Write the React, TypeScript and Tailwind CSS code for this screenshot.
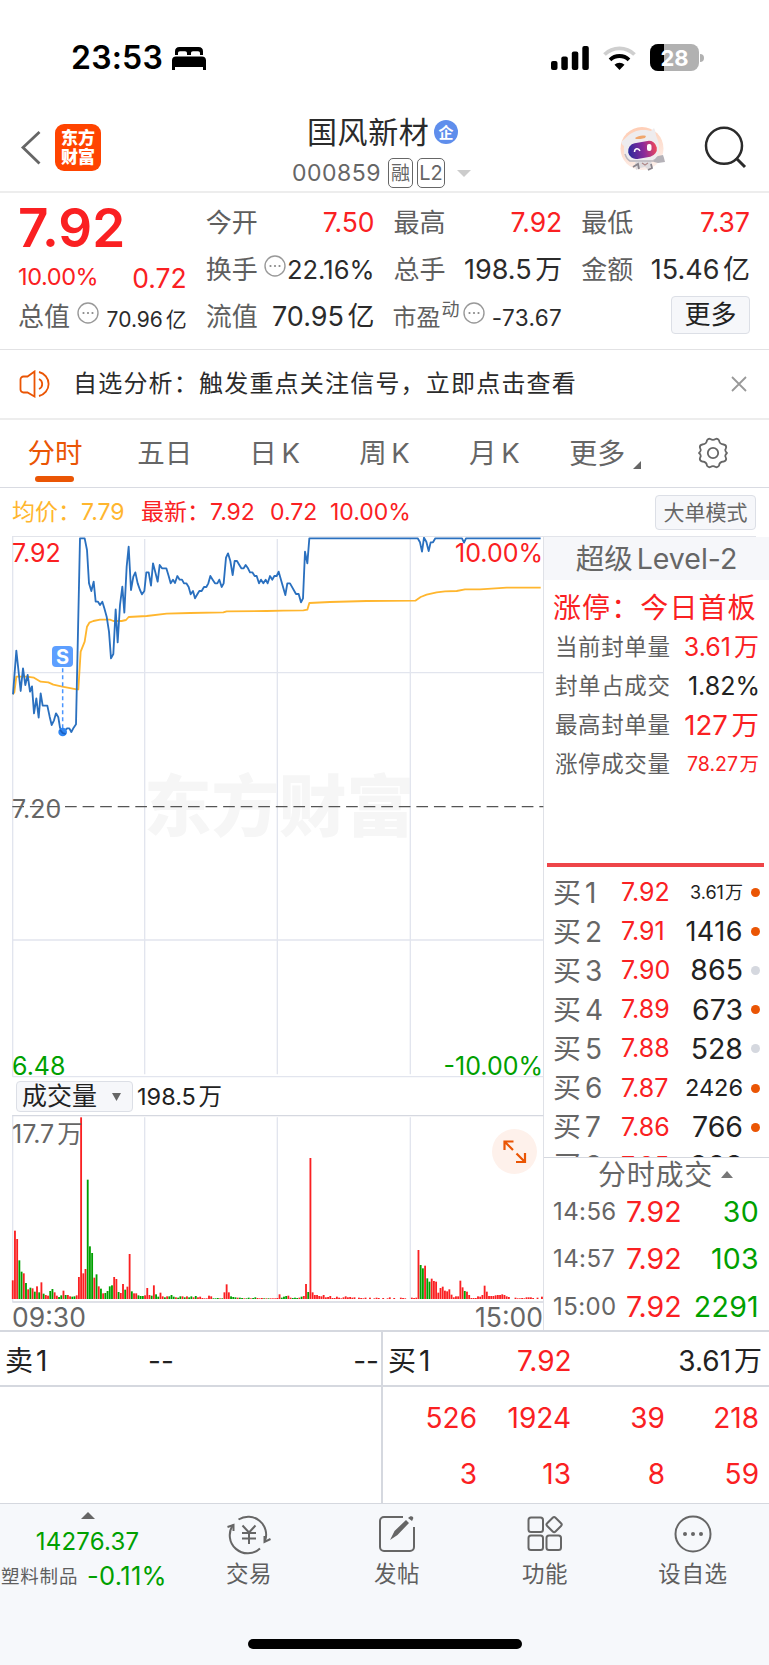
import type { ReactNode } from "react";

type Quote = { label: string; value: string; className?: string; hint?: boolean };

const RED = "#fa2022";
const GREEN = "#00a000";

// Minute prices, in the coordinate space of the chart's viewBox
const PRICE_LINE =
  "39,628 49,497 62,618 69,550 76,600 83,570 90,620 96,604 102,685 109,640 116,698 122,625 128,662 142,662 149,695 155,720 162,706 168,685 175,697 180,728 188,741 202,730 208,730 214,741 221,728 228,718 240,160 254,160 261,195 267,295 274,318 281,290 287,350 294,350 300,360 307,350 313,370 320,395 327,440 333,520 340,507 347,373 353,472 360,360 367,305 373,383 380,245 386,185 393,315 400,275 406,262 413,295 420,315 426,328 433,318 439,262 446,262 453,302 459,235 466,262 473,290 479,240 486,250 499,250 506,273 512,295 519,284 525,294 532,273 539,284 546,284 552,295 559,295 566,306 572,328 579,318 585,340 592,328 598,318 605,318 612,306 619,306 625,295 631,273 638,284 645,295 652,295 658,284 665,306 671,295 678,218 684,205 691,228 698,270 704,228 711,228 718,240 724,250 731,250 737,240 744,250 750,262 757,262 764,273 770,273 777,295 783,284 790,295 797,284 803,295 810,273 817,284 823,273 830,273 836,260 856,330 862,295 870,295 888,327 896,327 903,352 909,340 915,200 922,235 928,160 1253,160 1260,172 1266,200 1272,158 1279,170 1286,198 1292,172 1299,172 1306,160 1386,160 1392,173 1398,160 1622,160";

const AVERAGE_LINE =
  "39,628 43,622 49,575 80,575 102,578 122,590 145,592 160,599 187,605 230,613 235,613 242,500 254,470 261,425 268,413 280,408 300,404 330,404 340,408 365,408 378,405 386,396 440,393 500,386 570,384 670,382 680,379 800,378 850,377 910,376 922,374 928,354 990,351 1100,348 1246,347 1262,336 1280,329 1310,322 1335,319 1370,318 1395,313 1440,313 1520,308 1622,308";

// One entry per minute: r = up, g = down, then the bar height
const VOLUME = [
  "r56 r205 r180 g116 g82 r77 g48 r29 g34 r32 g22 r38 g20 r50 g16 r12 r10 g24 g30 r20 r10 g6 g11 r25 g12 r12 r8 g7 g8 r11",
  "r66 r545 r77 r90 g358 g158 g138 r64 g74 r38 g31 r17 g18 g24 g38 g41 r66 r60 g21 r18 r45 g28 r37 r135 g23 r17 r17 g11 g9 g9",
  "r11 r33 r12 g10 r41 g14 g7 r19 r8 g5 r8 g8 g12 g7 r5 g4 g8 r8 g5 r8 g5 g8 r5 g9 r5 r7 r3 r2 r2 r10",
  "r8 g2 g2 g3 r2 g2 r20 r44 r20 g8 g6 g5 r4 g4 g3 r2 g2 g4 r2 g3 g5 r3 r2 r3 g2 r2 g2 r2 r2 r2",
  "r3 r14 g4 g7 g9 r10 r4 g3 g4 g3 r4 g7 r9 r45 g21 r423 r20 r12 r12 r9 r8 r12 r5 r6 r9 r3 r3 r7 r4 r2",
  "r5 r8 r5 r6 r4 r5 r0 r4 r3 r2 r4 r0 r4 r0 r2 r4 r3 r0 r3 r0 r2 r5 r0 r3 r0 r0 r4 r3 r2 r0",
  "r0 r4 r3 r4 r147 g102 g92 r100 g62 g52 r61 r54 r52 r19 r33 r37 r25 r23 r29 r13 r5 r8 r8 r55 r35 g24 r22 r12 r3 r3",
  "r3 r8 r7 r12 r40 r22 r9 r9 r9 r11 r12 r12 r14 r12 r8 r6 r0 r0 r4 r2 r2 r3 r2 r5 r5 r5 r3 r0 r4 r0 r7",
]
  .join(" ")
  .split(" ");

const TABS = ["分时", "五日", "日 K", "周 K", "月 K"];

const QUOTE_COLUMNS: Quote[][] = [
  [
    { label: "今开", value: "7.50", className: "text-[26.5px] text-[#fa2022]" },
    { label: "换手", value: "22.16%", className: "text-[25.5px]", hint: true },
    { label: "流值", value: "70.95 亿", className: "text-[27px]" },
  ],
  [
    { label: "最高", value: "7.92", className: "text-[26.5px] text-[#fa2022]" },
    { label: "总手", value: "198.5 万", className: "text-[27px]" },
  ],
  [
    { label: "最低", value: "7.37", className: "text-[26.5px] text-[#fa2022]" },
    { label: "金额", value: "15.46 亿", className: "text-[27px]" },
  ],
];

const LIMIT_ROWS = [
  { label: "当前封单量", value: "3.61 万", className: "text-[25px] text-[#fa2022]" },
  { label: "封单占成交", value: "1.82%", className: "-mr-px text-[25px] text-[#222]" },
  { label: "最高封单量", value: "127 万", className: "text-[27.5px] text-[#fa2022]" },
  { label: "涨停成交量", value: "78.27 万", className: "text-[19.5px] text-[#fa2022]" },
];

const BIDS = [
  { level: 1, price: "7.92", volume: "3.61 万", size: "text-[18px]", hot: true },
  { level: 2, price: "7.91", volume: "1416", size: "text-[27px] tracking-[0.5px]", hot: true },
  { level: 3, price: "7.90", volume: "865", size: "text-[28.5px]", hot: false },
  { level: 4, price: "7.89", volume: "673", size: "text-[28.5px]", hot: true },
  { level: 5, price: "7.88", volume: "528", size: "text-[28.5px]", hot: false },
  { level: 6, price: "7.87", volume: "2426", size: "text-[23.5px]", hot: true },
  { level: 7, price: "7.86", volume: "766", size: "text-[28.5px]", hot: true },
  { level: 8, price: "7.85", volume: "808", size: "text-[28.5px]", hot: true },
];

const TRADES = [
  { time: "14:56", price: "7.92", volume: "30" },
  { time: "14:57", price: "7.92", volume: "103" },
  { time: "15:00", price: "7.92", volume: "2291" },
];

const QUEUE = ["526", "1924", "39", "218", "3", "13", "8", "59"];

function MoreDots({ className = "" }: { className?: string }) {
  return (
    <svg className={`h-[22px] w-[22px] shrink-0 ${className}`} viewBox="0 0 22 22">
      <circle cx="11" cy="11" r="10" fill="none" stroke="#999" strokeWidth="1.4" />
      <circle cx="6.5" cy="11" r="1.1" fill="#888" />
      <circle cx="11" cy="11" r="1.1" fill="#888" />
      <circle cx="15.5" cy="11" r="1.1" fill="#888" />
    </svg>
  );
}

function StatusBar() {
  return (
    <div className="flex h-[115px] items-center pl-[71px] pr-[65px] text-black">
      <span className="w-[101px] text-[32px] font-semibold tracking-[0.2px]">23:53</span>
      <svg className="h-6 w-[34px]" viewBox="0 0 34 24">
        <path d="M3 9V5.500C3 2.500 4.500 1 7.500 1h19c3 0 4.500 1.500 4.500 4.500V9h-3V7.500C28 6 27.300 5.300 26 5.300h-5c-1.300 0-2 .7-2 2.200V9h-4V7.500c0-1.500-.7-2.200-2-2.200H8c-1.300 0-2 .7-2 2.200V9z" />
        <path d="M0 24V14.500C0 12 1.500 10.500 4 10.500h26c2.500 0 4 1.500 4 4V24h-3v-3H3v3z" />
        <path d="M15.500 3h3v5h-3z" />
      </svg>
      <div className="ml-auto flex items-center">
        <svg className="h-6 w-[38px]" viewBox="0 0 38 24">
          <rect x="0" y="15" width="6.500" height="9" rx="2" />
          <rect x="10.300" y="10.500" width="6.500" height="13.500" rx="2" />
          <rect x="20.800" y="5.500" width="6.500" height="18.500" rx="2" />
          <rect x="31.300" y="0" width="6.500" height="24" rx="2" />
        </svg>
        <svg className="ml-[14px] h-6 w-[33px]" viewBox="0 0 33 24" fill="none">
          <path d="M1.500 8.500a21.500 21.500 0 0 1 30 0" stroke="#cfcfcf" strokeWidth="3.800" />
          <path d="M7 13.800a13.800 13.800 0 0 1 19 0" stroke="#000" strokeWidth="3.800" />
          <path d="M16.500 24l-5-5.200a7.200 7.200 0 0 1 10 0z" fill="#000" />
        </svg>
        <div className="relative ml-[14px] flex h-[27px] w-[49px] items-center justify-center overflow-hidden rounded-[8px] bg-[#b1b1b1]">
          <div className="absolute inset-y-0 left-0 w-[14px] bg-black" />
          <span className="relative text-[22px] font-bold text-white">28</span>
        </div>
        <div className="ml-px h-[8px] w-[4px] rounded-r-full bg-[#b1b1b1]" />
      </div>
    </div>
  );
}

function Robot() {
  return (
    <svg className="h-[46px] w-[46px]" viewBox="0 0 46 46">
      <defs>
        <linearGradient id="visor" x1="0" x2="1">
          <stop offset="0" stopColor="#2b2a9c" />
          <stop offset="0.550" stopColor="#8c2a9a" />
          <stop offset="1" stopColor="#f0485a" />
        </linearGradient>
        <linearGradient id="halo" x1="0" x2="0.300" y2="1">
          <stop offset="0" stopColor="#ffc9ae" />
          <stop offset="1" stopColor="#fdeee8" />
        </linearGradient>
      </defs>
      <circle cx="22" cy="22.500" r="21.500" fill="url(#halo)" />
      <path d="M17 33h13l2 5-3 6-4-3-5 1-4 2-1-6z" fill="#dedbde" />
      <path d="M13 41l5-3 1 5M31 38l1 4-4 2" stroke="#8b858c" strokeWidth="1.800" fill="none" />
      <path d="M22 37l3 2 3-2" stroke="#b08a8a" strokeWidth="1.200" fill="none" />
      <path d="M33 33l5-3 5-1 1 3 1 4-7 1-4-1z" fill="#b5b2b8" />
      <path d="M2 15c4-2 6-7 12-9 6-3 13-2 17-1l3-3c2 3 1 6 3 10 3 6 3 16-2 21-6 3-19 4-26 2-6-4-5-11-5-15-2-1-3-3-2-5z" fill="#eeecee" />
      <path d="M5 28c1 3 3 6 5 7h24" stroke="#bbb7bd" strokeWidth="1.500" fill="none" />
      <path d="M15 12c3-2 7-3 11-2l-1 2c-3 1-6 1-9 1z" fill="#f0a66c" />
      <rect x="8" y="16" width="29" height="16" rx="8" transform="rotate(-10 22 24)" fill="url(#visor)" />
      <path d="M14.500 26c0-4 4-4.500 5.500-1" stroke="#fff" strokeWidth="1.500" fill="none" />
      <rect x="27" y="18" width="4.500" height="7" rx="2" fill="#fff" />
    </svg>
  );
}

function Header() {
  return (
    <div className="flex h-[78px] items-start border-b-2 border-[#ededed] pl-5">
      <svg className="mt-[15px] h-[36px] w-[22px]" viewBox="0 0 22 36" fill="none">
        <path d="M19.500 2L3 17.500 19.500 33.500" stroke="#666" strokeWidth="2.800" />
      </svg>
      <div className="ml-[13px] mt-[9px] flex h-[47px] w-[46px] flex-col items-center justify-center rounded-[9px] bg-[#ff4400] text-[17px] font-black leading-[19px] text-white">
        <span>东方</span>
        <span>财富</span>
      </div>
      <div className="ml-[178px] w-[206px]">
        <div className="-mt-px flex h-[36px] items-center pl-[28px]">
          <span className="w-[127px] whitespace-nowrap text-[30px] tracking-[0.6px] text-[#2b2b2b]">
            国风新材
          </span>
          <span className="flex h-6 w-6 items-center justify-center rounded-full bg-[#5f8eec] text-[15px] font-bold text-white">
            企
          </span>
        </div>
        <div className="mt-[7px] flex h-[32px] items-center pl-[13px] text-[#666]">
          <span className="w-[96px] text-[23px] tracking-[0.5px]">000859</span>
          <span className="flex h-[30px] w-[25px] items-center justify-center rounded-[5px] border border-[#666] text-[19px]">
            融
          </span>
          <span className="ml-1 flex h-[30px] w-[28px] items-center justify-center rounded-[5px] border border-[#666] text-[20px]">
            L2
          </span>
          <svg className="ml-3 h-[7px] w-[14px]" viewBox="0 0 14 7">
            <path d="M0 0h14L7 7z" fill="#ccc" />
          </svg>
        </div>
      </div>
      <div className="ml-[135px] mt-[11px]">
        <Robot />
      </div>
      <svg className="ml-[38px] mt-[11px] h-[44px] w-[44px]" viewBox="0 0 44 44" fill="none">
        <circle cx="20" cy="19.800" r="18" stroke="#2b2b2b" strokeWidth="2.500" />
        <path d="M32 32l9 9" stroke="#2b2b2b" strokeWidth="3" />
      </svg>
    </div>
  );
}

function QuoteRow({ label, value, className = "", hint }: Quote) {
  return (
    <div className="-ml-px flex h-[47px] items-center whitespace-nowrap">
      <span className="text-[26px] text-[#5f5f5f]">{label}</span>
      {hint && <MoreDots className="-mt-2 ml-[6px]" />}
      <span className={`ml-auto [word-spacing:-4px] ${className}`}>{value}</span>
    </div>
  );
}

function QuotePanel() {
  return (
    <div className="flex h-[157px] gap-5 border-b border-[#e2e2e4] px-[19px] pt-[6px] text-[#2b2b2b]">
      <div className="-ml-px w-[169px]">
        <div className="flex h-[58px] items-center text-[53px] font-semibold text-[#fa2022]">7.92</div>
        <div className="flex h-9 items-center justify-between text-[#fa2022]">
          <span className="pt-1 text-[23.5px] tracking-[-0.4px]">10.00%</span>
          <span className="pt-[7px] text-[26.500px]">0.72</span>
        </div>
        <div className="flex h-[47px] items-center whitespace-nowrap">
          <span className="text-[26px] text-[#5f5f5f]">总值</span>
          <MoreDots className="-mt-2 ml-[7px]" />
          <span className="ml-auto pt-[6px] text-[21px] [word-spacing:-3px]">70.96 亿</span>
        </div>
      </div>
      {QUOTE_COLUMNS.map((rows, i) => (
        <div key={i} className="w-[168px]">
          {rows.map((row) => (
            <QuoteRow key={row.label} {...row} />
          ))}
          {i === 1 && (
            <div className="-ml-[2px] flex h-[47px] items-center whitespace-nowrap">
              <span className="pt-[3px] text-[24px] text-[#5f5f5f]">市盈</span>
              <span className="-mt-[13px] ml-px text-[18px] text-[#5f5f5f]">动</span>
              <MoreDots className="-mt-2 ml-[3px]" />
              <span className="ml-auto pt-[4px] text-[22.5px] tracking-[0.4px]">-73.67</span>
            </div>
          )}
          {i === 2 && (
            <div className="ml-auto mt-[3px] flex h-[38px] w-[79px] items-center justify-center rounded-[4px] border border-[#dcdfe6] bg-[#f6f7fa] text-[26px] text-[#222]">
              更多
            </div>
          )}
        </div>
      ))}
    </div>
  );
}

function Notice() {
  return (
    <div className="flex h-[70px] items-center border-b-2 border-[#ededed] pl-[19px] pr-[22px]">
      <svg className="h-[28px] w-[34px]" viewBox="0 0 34 28" fill="none" stroke="#ea5504" strokeWidth="1.800">
        <path d="M15.500 1.500v25L8.500 22.500H4.500a3 3 0 0 1-3-3v-10a3 3 0 0 1 3-3h4z" />
        <path d="M20 9a5.500 5.500 0 0 1 0 10" />
        <path d="M20 2a12.300 12.300 0 0 1 0 24" />
      </svg>
      <span className="ml-[20px] whitespace-nowrap text-[24px] tracking-[1.2px] text-[#2b2b2b]">
        自选分析：触发重点关注信号，立即点击查看
      </span>
      <svg className="ml-auto h-[16px] w-[16px]" viewBox="0 0 16 16">
        <path d="M1 1l14 14M15 1L1 15" stroke="#999" strokeWidth="1.800" />
      </svg>
    </div>
  );
}

function Tabs() {
  return (
    <div className="grid h-[68px] grid-cols-7 border-b border-[#d9dbe2] text-[27.500px] text-[#666] [word-spacing:-3px]">
      {TABS.map((tab, i) => (
        <div key={tab} className="relative flex items-center justify-center">
          {i === 0 ? <span className="text-[#ea5504]">{tab}</span> : tab}
          {i === 0 && <div className="absolute bottom-[5px] h-[6px] w-[39px] rounded-full bg-[#ea5504]" />}
        </div>
      ))}
      <div className="flex items-center justify-center pl-[2px] text-[28px]">
        更多
        <svg className="ml-[8px] mt-[22px] h-2 w-2" viewBox="0 0 8 8">
          <path d="M8 0v8H0z" fill="#666" />
        </svg>
      </div>
      <div className="flex items-center justify-center pr-[2px]">
        <svg className="-mt-px h-[32px] w-[32px]" viewBox="0 0 32 32" fill="none" stroke="#666" strokeWidth="1.800">
          <path
            d="M10 3.200q1.600-2 3.400-1.200q2.600 1.600 5.200 0q1.800-.8 3.400 1.200q.3 3.800 4.600 4.300q2.400.4 2.600 2.600q-.4 1.800-1 2.900q.2 1.800 1.800 3q-1.600 1.500-1.800 3q.6 1.400 1 2.900q-.2 2.200-2.600 2.600q-4.300.5-4.600 4.300q-1.600 2-3.400 1.200q-2.600-1.600-5.200 0q-1.800.8-3.400-1.200q-.3-3.800-4.600-4.300q-2.400-.4-2.600-2.600q.4-1.800 1-2.900q-.2-1.800-1.800-3q1.600-1.500 1.800-3q-.6-1.400-1-2.900q.2-2.200 2.600-2.600q4.300-.5 4.600-4.300z"
            strokeLinejoin="round"
          />
          <circle cx="16" cy="16" r="5.200" />
        </svg>
      </div>
    </div>
  );
}

function AverageBar() {
  return (
    <div className="ml-3 mr-[13px] flex h-[49px] items-center whitespace-nowrap border-b border-[#e2e4ea] pt-px text-[23px] text-[#fa2022]">
      <span className="w-[129px] text-[#ffb62e]">均价：7.79</span>
      <span className="w-[129px]">最新：7.92</span>
      <span className="w-[60px]">0.72</span>
      <span>10.00%</span>
      <span className="ml-auto flex h-[35px] w-[101px] items-center justify-center rounded-[4px] border border-[#dcdfe6] bg-[#f6f7fa] text-[21px] text-[#666]">
        大单模式
      </span>
    </div>
  );
}

function PriceChart() {
  return (
    <div className="relative h-[541px] text-[25px] leading-[30px]">
      <div className="absolute left-[144px] top-[233px] whitespace-nowrap text-[67.5px] font-black leading-[74px] text-[#f6f6f6]">
        东方财富
      </div>
      <svg className="absolute inset-0 h-[541px] w-[544px]" viewBox="0 156 1632 1623" fill="none">
        <g stroke="#e2e5ee" strokeWidth="4">
          <path d="M434 162V1768M832 162V1768M1231 162V1768M38 563H1630M38 1365H1630" />
          <path d="M38 154V1775M38 1775H1630" />
        </g>
        <path d="M37 965H1630" stroke="#555" strokeWidth="3.500" strokeDasharray="35 17.700" />
        <polyline points={AVERAGE_LINE} stroke="#ffb62e" strokeWidth="5.500" strokeLinejoin="round" />
        <polyline points={PRICE_LINE} stroke="#2a70bf" strokeWidth="5.500" strokeLinejoin="round" />
        <path d="M188 550V730" stroke="#4a95ff" strokeWidth="4.500" strokeDasharray="12 9" />
        <circle cx="188" cy="741" r="13" fill="#2f86f2" />
        <path d="M180 734l8 10 9 3" stroke="#1b5fc0" strokeWidth="5" />
      </svg>
      <span className="absolute left-[52px] top-[109px] flex h-[21px] w-[21px] items-center justify-center rounded-[4px] bg-[#5d9fff] text-[20px] font-bold text-white">
        S
      </span>
      <span className="absolute left-3 top-px text-[#fa2022]">7.92</span>
      <span className="absolute right-0 top-px text-[#fa2022]">10.00%</span>
      <span className="absolute left-3 top-[257px] text-[#666]">7.20</span>
      <span className="absolute left-3 top-[514px] text-[#00a000]">6.48</span>
      <span className="absolute right-0 top-[514px] text-[#00a000]">-10.00%</span>
    </div>
  );
}

function VolumeChart() {
  return (
    <div className="relative h-[188px]">
      <svg className="absolute inset-0 h-[188px] w-[544px]" viewBox="0 194 1632 564">
        <path d="M434 201V746M832 201V746M1231 201V746" stroke="#e2e5ee" strokeWidth="4" />
        <path d="M38 192V754" stroke="#e2e5ee" strokeWidth="4" />
        <path d="M37 196H1630M37 755H1630" stroke="#d5d8e0" strokeWidth="4" />
        {VOLUME.map((bar, i) => {
          const height = Number(bar.slice(1));
          return (
            <rect
              key={i}
              x={35.5 + i * 6.615}
              y={746 - height}
              width="5.500"
              height={height}
              fill={bar[0] === "r" ? RED : GREEN}
            />
          );
        })}
      </svg>
      <span className="absolute left-3 top-1 text-[25px] leading-[30px] text-[#666] [word-spacing:-4px]">
        17.7 万
      </span>
      <div className="absolute right-[6px] top-[14px] h-[45px] w-[45px] rounded-full bg-[#fef1eb]">
        <svg className="h-[45px] w-[45px]" viewBox="0 0 45 45" fill="none" stroke="#ea5504" strokeWidth="2.200">
          <path d="M12.500 21V12.500H21.500M12.500 12.500L21 21" />
          <path d="M33 24V33H24M33 33L24.500 24.500" />
        </svg>
      </div>
    </div>
  );
}

function ChartColumn() {
  return (
    <div className="w-[544px] border-r border-[#dfe1e7]">
      <PriceChart />
      <div className="flex h-[37px] items-center pl-4 text-[#222]">
        <div className="flex h-[31px] w-[117px] items-center rounded-[4px] border border-[#dcdfe6] bg-[#f6f7fa] pl-[5px] text-[25px]">
          成交量
          <svg className="ml-[15px] h-2 w-[9px]" viewBox="0 0 9 8">
            <path d="M0 0h9L4.500 8z" fill="#666" />
          </svg>
        </div>
        <span className="ml-1 text-[23.5px] [word-spacing:-4px]">198.5 万</span>
      </div>
      <VolumeChart />
      <div className="flex h-[28px] items-center justify-between pl-[12px] text-[26.500px] text-[#666]">
        <span>09:30</span>
        <span>15:00</span>
      </div>
    </div>
  );
}

function SidePanel() {
  return (
    <div className="flex-1 [word-spacing:-4px]">
      <div className="flex h-[43px] items-center justify-center bg-[#f6f7fa] pt-px text-[28.500px] text-[#666]">
        超级 Level-2
      </div>
      <div className="h-[283px] pl-[9px] pr-[10px] pt-[9px]">
        <div className="h-[39px] whitespace-nowrap text-[28px] leading-[39px] tracking-[1.1px] text-[#fa2022]">
          涨停：今日首板
        </div>
        {LIMIT_ROWS.map((row) => (
          <div key={row.label} className="flex h-[39px] items-center justify-between whitespace-nowrap pl-[2px]">
            <span className="text-[22.5px] tracking-[0.6px] text-[#5f5f5f]">{row.label}</span>
            <span className={row.className}>{row.value}</span>
          </div>
        ))}
      </div>
      <div className="ml-[3px] mr-[5px] h-[4px] bg-[#ee4549]" />
      <div className="h-[290px] overflow-hidden pt-[6px]">
        {BIDS.map((bid) => (
          <div key={bid.level} className="flex h-[39.1px] items-center whitespace-nowrap pl-[9px] pr-[9px]">
            <span className="w-[68px] text-[28px] text-[#666]">买 {bid.level}</span>
            <span className="w-[50px] text-[25px] text-[#fa2022]">{bid.price}</span>
            <span className={`ml-auto text-[#222] ${bid.size}`}>{bid.volume}</span>
            <span
              className={`ml-2 h-[9px] w-[9px] rounded-full ${bid.hot ? "bg-[#ea5504]" : "bg-[#d5d8df]"}`}
            />
          </div>
        ))}
      </div>
      <div className="flex h-[31px] items-center justify-center border-t border-[#d5d8df] pl-[18px] pt-[3px] text-[28px] tracking-[0.8px] text-[#666]">
        分时成交
        <svg className="ml-[8px] h-[7px] w-[12px]" viewBox="0 0 12 7">
          <path d="M6 0l6 7H0z" fill="#777" />
        </svg>
      </div>
      {TRADES.map((trade) => (
        <div key={trade.time} className="flex h-[47.5px] items-center pl-[9px] pr-[10px]">
          <span className="w-[73px] text-[24px] tracking-[0.4px] text-[#666]">{trade.time}</span>
          <span className="text-[28.5px] text-[#fa2022]">{trade.price}</span>
          <span className="ml-auto text-[28.5px] tracking-[0.3px] text-[#00a000]">{trade.volume}</span>
        </div>
      ))}
    </div>
  );
}

function OrderQueue() {
  return (
    <div className="flex h-[173px] border-t-2 border-[#d5d8df] text-[28px] text-[#222] [word-spacing:-5px]">
      <div className="w-[383px] border-r-2 border-[#d5d8df]">
        <div className="flex h-[55px] items-center border-b-2 border-[#d5d8df] pl-[5px] pr-[2px] pt-[5px]">
          <span className="w-[143px]">卖 1</span>
          <span>--</span>
          <span className="ml-auto">--</span>
        </div>
      </div>
      <div className="flex-1">
        <div className="flex h-[55px] items-center border-b-2 border-[#d5d8df] pl-[5px] pr-[7px] pt-[5px]">
          <span className="w-[129px]">买 1</span>
          <span className="text-[#fa2022]">7.92</span>
          <span className="ml-auto">3.61 万</span>
        </div>
        <div className="grid grid-cols-4 pr-[10px] pt-[3px] text-right text-[28px] leading-[56px] text-[#fa2022]">
          {QUEUE.map((volume, i) => (
            <span key={i}>{volume}</span>
          ))}
        </div>
      </div>
    </div>
  );
}

function Action({ label, children }: { label: string; children: ReactNode }) {
  return (
    <div className="flex w-[148px] flex-col items-center pt-[9px]">
      <svg className="h-[42px] w-[44px]" viewBox="0 0 44 42" fill="none" stroke="#666" strokeWidth="2">
        {children}
      </svg>
      <span className="mt-[4px] text-[22.500px] leading-[30px] tracking-[0.6px]">{label}</span>
    </div>
  );
}

function BottomBar() {
  return (
    <div className="flex h-[162px] flex-col border-t border-[#d5d8df] bg-[#f6f8fb] text-[#5f5f5f]">
      <div className="flex h-[135px]">
        <div className="flex w-[175px] flex-col items-center pt-[8px]">
          <svg className="h-[7px] w-[14px]" viewBox="0 0 14 7">
            <path d="M7 0l7 7H0z" fill="#666" />
          </svg>
          <span className="mt-[5px] text-[24px] leading-[36px] tracking-[0.2px] text-[#00a000]">14276.37</span>
          <div className="-mt-[2px] flex h-[36px] w-full items-center whitespace-nowrap">
            <span className="w-[87px] pl-px text-[18.500px] tracking-[0.800px]">塑料制品</span>
            <span className="text-[25.500px] tracking-[0.3px] text-[#00a000]">-0.11%</span>
          </div>
        </div>
        <Action label="交易">
          <path d="M11.500 6.500A18 18 0 0 1 38 28M33 35.500A18 18 0 0 1 6 12" />
          <path d="M.5 14L6.500 12v6M43.500 26L37.500 29v-6" />
          <path d="M15.500 12.500l6.500 7 6.500-7M15 20h14M15 25.500h14M22 19.500v11.500" />
        </Action>
        <Action label="发帖">
          <path d="M28 4H9a4 4 0 0 0-4 4v26a4 4 0 0 0 4 4h26a4 4 0 0 0 4-4V14" />
          <path d="M15 27l4.500-9L31 7l3 3-11.500 12zM33 5l2-1.500c2-1 4 .5 3 2.500L37 8z" fill="#666" stroke="none" />
        </Action>
        <Action label="功能">
          <rect x="5.500" y="4.500" width="14.500" height="14.500" rx="2.500" />
          <rect x="5.500" y="22.500" width="14.500" height="14.500" rx="2.500" />
          <rect x="23.500" y="22.500" width="14.500" height="14.500" rx="2.500" />
          <rect x="25.200" y="5.700" width="11.800" height="11.800" rx="2" transform="rotate(45 31.100 11.600)" />
        </Action>
        <Action label="设自选">
          <circle cx="22" cy="21" r="17.500" />
          <g fill="#666" stroke="none">
            <circle cx="14" cy="21" r="2" />
            <circle cx="22" cy="21" r="2" />
            <circle cx="30" cy="21" r="2" />
          </g>
        </Action>
      </div>
      <div className="mx-auto h-[10px] w-[274px] rounded-full bg-black" />
    </div>
  );
}

export default function App() {
  return (
    <div
      lang="zh-CN"
      className="h-[1665px] w-[769px] overflow-hidden bg-white font-['Inter','Noto_Sans_CJK_SC',sans-serif] leading-none"
    >
      <StatusBar />
      <Header />
      <QuotePanel />
      <Notice />
      <Tabs />
      <AverageBar />
      <div className="flex h-[793px]">
        <ChartColumn />
        <SidePanel />
      </div>
      <OrderQueue />
      <BottomBar />
    </div>
  );
}
